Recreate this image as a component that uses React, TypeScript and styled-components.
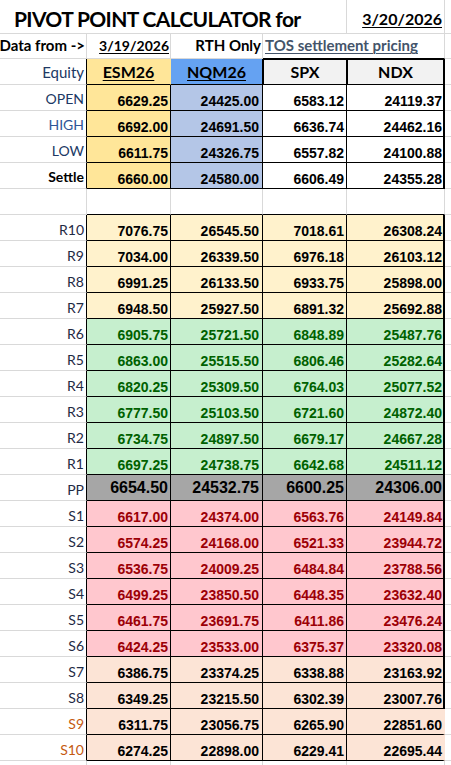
import React from "react";
import styled, { createGlobalStyle } from "styled-components";

const GRID = "#d9d9d9";
const INK = "#000";

const GlobalStyle = createGlobalStyle`
  html, body { margin: 0; padding: 0; background: #ffffff; }
  body { font-family: Lato, "Liberation Sans", sans-serif; }
`;

const Sheet = styled.div`
  width: 451px;
  height: 765px;
  overflow: hidden;
  background: #ffffff;
  display: flex;
  flex-direction: column;
`;

const Row = styled.div<{ $h: number }>`
  display: grid;
  grid-template-columns: 87px 84px 92px 84px 98px 1fr;
  height: ${(p) => p.$h}px;
  flex: none;
`;

const Cell = styled.div<{
  $bg?: string;
  $right?: string;
  $rightW?: number;
  $bottom?: string;
  $span?: number;
}>`
  box-sizing: border-box;
  min-width: 0;
  white-space: nowrap;
  background: ${(p) => p.$bg ?? "transparent"};
  border-right: ${(p) => p.$rightW ?? 1}px solid ${(p) => p.$right ?? GRID};
  border-bottom: 1px solid ${(p) => p.$bottom ?? GRID};
  ${(p) => (p.$span ? `grid-column: span ${p.$span};` : "")}
`;

const Filler = styled(Cell)<{ $noBottom?: boolean }>`
  border-right: none;
  ${(p) => (p.$noBottom ? "border-bottom: none;" : "")}
`;

const TitleCell = styled(Cell)`
  padding: 8px 0 0 14px;
  font-size: 21px;
  line-height: 21px;
  font-weight: 700;
  color: #000;
  letter-spacing: -0.65px;
`;

const DateCell = styled(Cell)`
  display: flex;
  justify-content: flex-end;
  padding: 11px 2px 0 0;
  font-size: 16px;
  line-height: 16px;
  font-weight: 700;
  color: #000;
`;

const Underlined = styled.span`
  text-decoration: underline;
  text-decoration-thickness: 1px;
  text-underline-offset: 2px;
`;

const InfoCell = styled(Cell)<{ $align?: "left" | "right"; $size?: number }>`
  display: flex;
  justify-content: ${(p) => (p.$align === "left" ? "flex-start" : "flex-end")};
  padding: 3px ${(p) => (p.$align === "left" ? "0 0 2px" : "1px 0 0")};
  font-size: ${(p) => p.$size ?? 15}px;
  line-height: 17px;
  font-weight: 700;
  color: #000;
  overflow: visible;
`;

const LinkText = styled.span`
  color: #44546a;
  text-decoration: underline;
  text-decoration-thickness: 1px;
  text-underline-offset: 2px;
`;

const HeaderCell = styled(Cell)<{ $top?: boolean; $left?: boolean }>`
  display: flex;
  justify-content: center;
  padding-top: ${(p) => (p.$top ? 3 : 4)}px;
  font-size: 16px;
  line-height: 18px;
  font-weight: 700;
  color: #000;
  ${(p) => (p.$top ? `border-top: 1px solid ${INK};` : "")}
  ${(p) => (p.$left ? `border-left: 1px solid ${INK};` : "")}
`;

const LabelCell = styled(Cell)<{ $color: string; $bold?: boolean; $pt: number; $size?: number }>`
  display: flex;
  justify-content: flex-end;
  padding: ${(p) => p.$pt}px 2px 0 0;
  font-size: ${(p) => p.$size ?? 14}px;
  line-height: 17px;
  font-weight: ${(p) => (p.$bold ? 700 : 400)};
  color: ${(p) => p.$color};
`;

const ValueCell = styled(Cell)<{ $color: string; $big?: boolean; $pr: number }>`
  display: flex;
  justify-content: flex-end;
  padding: ${(p) => (p.$big ? 4 : 8)}px ${(p) => p.$pr}px 0 0;
  font-family: "Liberation Sans", Arial, sans-serif;
  font-size: ${(p) => (p.$big ? 16 : 14)}px;
  line-height: ${(p) => (p.$big ? 18 : 16)}px;
  font-weight: 700;
  color: ${(p) => p.$color};
`;

type Tone = {
  bg: [string, string, string, string];
  ink: string;
  big?: boolean;
  openRight?: boolean;
};

const TONES: Record<string, Tone> = {
  base: { bg: ["#ffe699", "#b4c6e7", "#ffffff", "#ffffff"], ink: "#000" },
  far: { bg: ["#fff2cc", "#fff2cc", "#fff2cc", "#fff2cc"], ink: "#000" },
  res: { bg: ["#c6efce", "#c6efce", "#c6efce", "#c6efce"], ink: "#006100" },
  pp: { bg: ["#a6a6a6", "#a6a6a6", "#a6a6a6", "#a6a6a6"], ink: "#000", big: true },
  sup: { bg: ["#ffc7ce", "#ffc7ce", "#ffc7ce", "#ffc7ce"], ink: "#9c0006" },
  low: { bg: ["#fce4d6", "#fce4d6", "#fce4d6", "#fce4d6"], ink: "#000" },
  lowOpen: { bg: ["#fce4d6", "#fce4d6", "#fce4d6", "#fce4d6"], ink: "#000", openRight: true },
};

type DataRow = {
  label: string;
  labelColor: string;
  bold?: boolean;
  tone: keyof typeof TONES;
  values: [string, string, string, string];
};

const NAVY = "#1f2a44";

const TOP_ROWS: DataRow[] = [
  { label: "OPEN", labelColor: "#203864", tone: "base", values: ["6629.25", "24425.00", "6583.12", "24119.37"] },
  { label: "HIGH", labelColor: "#2f5597", tone: "base", values: ["6692.00", "24691.50", "6636.74", "24462.16"] },
  { label: "LOW", labelColor: "#203864", tone: "base", values: ["6611.75", "24326.75", "6557.82", "24100.88"] },
  { label: "Settle", labelColor: "#000", bold: true, tone: "base", values: ["6660.00", "24580.00", "6606.49", "24355.28"] },
];

const LEVEL_ROWS: DataRow[] = [
  { label: "R10", labelColor: NAVY, tone: "far", values: ["7076.75", "26545.50", "7018.61", "26308.24"] },
  { label: "R9", labelColor: NAVY, tone: "far", values: ["7034.00", "26339.50", "6976.18", "26103.12"] },
  { label: "R8", labelColor: NAVY, tone: "far", values: ["6991.25", "26133.50", "6933.75", "25898.00"] },
  { label: "R7", labelColor: NAVY, tone: "far", values: ["6948.50", "25927.50", "6891.32", "25692.88"] },
  { label: "R6", labelColor: NAVY, tone: "res", values: ["6905.75", "25721.50", "6848.89", "25487.76"] },
  { label: "R5", labelColor: NAVY, tone: "res", values: ["6863.00", "25515.50", "6806.46", "25282.64"] },
  { label: "R4", labelColor: NAVY, tone: "res", values: ["6820.25", "25309.50", "6764.03", "25077.52"] },
  { label: "R3", labelColor: NAVY, tone: "res", values: ["6777.50", "25103.50", "6721.60", "24872.40"] },
  { label: "R2", labelColor: NAVY, tone: "res", values: ["6734.75", "24897.50", "6679.17", "24667.28"] },
  { label: "R1", labelColor: NAVY, tone: "res", values: ["6697.25", "24738.75", "6642.68", "24511.12"] },
  { label: "PP", labelColor: NAVY, tone: "pp", values: ["6654.50", "24532.75", "6600.25", "24306.00"] },
  { label: "S1", labelColor: NAVY, tone: "sup", values: ["6617.00", "24374.00", "6563.76", "24149.84"] },
  { label: "S2", labelColor: NAVY, tone: "sup", values: ["6574.25", "24168.00", "6521.33", "23944.72"] },
  { label: "S3", labelColor: NAVY, tone: "sup", values: ["6536.75", "24009.25", "6484.84", "23788.56"] },
  { label: "S4", labelColor: NAVY, tone: "sup", values: ["6499.25", "23850.50", "6448.35", "23632.40"] },
  { label: "S5", labelColor: NAVY, tone: "sup", values: ["6461.75", "23691.75", "6411.86", "23476.24"] },
  { label: "S6", labelColor: NAVY, tone: "sup", values: ["6424.25", "23533.00", "6375.37", "23320.08"] },
  { label: "S7", labelColor: NAVY, tone: "low", values: ["6386.75", "23374.25", "6338.88", "23163.92"] },
  { label: "S8", labelColor: NAVY, tone: "low", values: ["6349.25", "23215.50", "6302.39", "23007.76"] },
  { label: "S9", labelColor: "#c55a11", tone: "lowOpen", values: ["6311.75", "23056.75", "6265.90", "22851.60"] },
  { label: "S10", labelColor: "#c55a11", tone: "lowOpen", values: ["6274.25", "22898.00", "6229.41", "22695.44"] },
];

const PAD_RIGHT = [2, 3, 2, 1];

function SheetRow({ row, labelTop }: { row: DataRow; labelTop: number }) {
  const tone = TONES[row.tone];
  return (
    <Row $h={26}>
      <LabelCell $color={row.labelColor} $bold={row.bold} $pt={labelTop} $right={INK}>
        {row.label}
      </LabelCell>
      {row.values.map((v, i) => {
        const last = i === 3;
        const rightColor = last && tone.openRight ? tone.bg[i] : INK;
        return (
          <ValueCell
            key={i}
            $bg={tone.bg[i]}
            $color={tone.ink}
            $big={tone.big}
            $pr={PAD_RIGHT[i]}
            $right={rightColor}
            $rightW={last ? 2 : 1}
            $bottom={INK}
          >
            {v}
          </ValueCell>
        );
      })}
      <Filler />
    </Row>
  );
}

export default function App() {
  return (
    <>
      <GlobalStyle />
      <Sheet>
        <Row $h={34}>
          <TitleCell $span={4}>PIVOT POINT CALCULATOR for</TitleCell>
          <DateCell>
            <Underlined>3/20/2026</Underlined>
          </DateCell>
          <Filler />
        </Row>

        <Row $h={25}>
          <InfoCell>Data from -&gt;</InfoCell>
          <InfoCell $size={14}>
            <Underlined>3/19/2026</Underlined>
          </InfoCell>
          <InfoCell>RTH Only</InfoCell>
          <InfoCell $align="left" $span={2} $bottom={INK}>
            <LinkText>TOS settlement pricing</LinkText>
          </InfoCell>
          <Filler />
        </Row>

        <Row $h={26}>
          <LabelCell $color="#203864" $pt={5} $size={15} $right={INK}>
            Equity
          </LabelCell>
          <HeaderCell $bg="#ffe699" $right="#ffe699" $bottom={INK}>
            <Underlined>ESM26</Underlined>
          </HeaderCell>
          <HeaderCell $bg="#65a2f2" $right={INK} $bottom={INK}>
            <Underlined>NQM26</Underlined>
          </HeaderCell>
          <HeaderCell $bg="#f2f2f2" $top $left $right={INK} $bottom={INK}>
            SPX
          </HeaderCell>
          <HeaderCell $bg="#f2f2f2" $top $left $right={INK} $rightW={2} $bottom={INK}>
            NDX
          </HeaderCell>
          <Filler />
        </Row>

        {TOP_ROWS.map((r) => (
          <SheetRow key={r.label} row={r} labelTop={5} />
        ))}

        <Row $h={26}>
          <Cell />
          <Cell $bottom={INK} />
          <Cell $bottom={INK} />
          <Cell $bottom={INK} />
          <Cell $bottom={INK} />
          <Filler />
        </Row>

        {LEVEL_ROWS.map((r) => (
          <SheetRow key={r.label} row={r} labelTop={6} />
        ))}

        <Row $h={10}>
          <Cell />
          <Cell />
          <Cell />
          <Cell />
          <Cell />
          <Filler $noBottom />
        </Row>
      </Sheet>
    </>
  );
}
